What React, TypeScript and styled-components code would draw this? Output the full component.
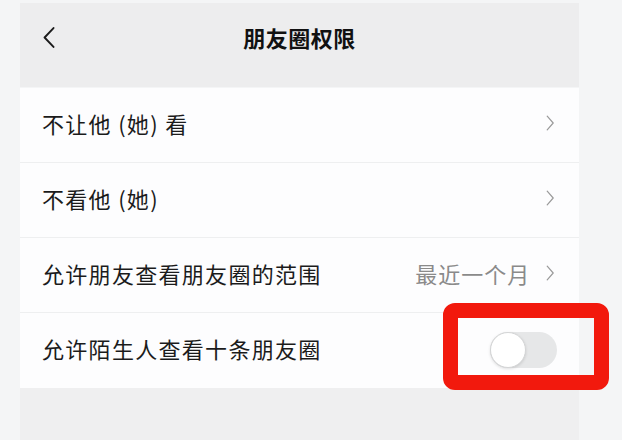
import styled, { createGlobalStyle } from "styled-components"

const GlobalStyle = createGlobalStyle`
    html, body {
        margin: 0;
        padding: 0;
        background: #f4f5f6;
        font-family: "Noto Sans CJK SC", "Noto Sans", sans-serif;
        color: #1b1b1b;
    }
`

type Item = {
    label: string
    value?: string
    arrow?: boolean
    toggle?: boolean
}

const items: Item[] = [
    { label: "不让他 (她) 看", arrow: true },
    { label: "不看他 (她)", arrow: true },
    { label: "允许朋友查看朋友圈的范围", value: "最近一个月", arrow: true },
    { label: "允许陌生人查看十条朋友圈", toggle: true },
]

const Chevron = ({ dir, color, size }: { dir: "left" | "right"; color: string; size: number }) => (
    <svg width={size * 0.55} height={size} viewBox="0 0 11 20" fill="none">
        {dir === "left"
            ? <path d="M10 1 L1.5 10 L10 19" stroke={color} strokeWidth="1.8" strokeLinecap="round" strokeLinejoin="round" />
            : <path d="M1.5 1.5 L9 10 L1.5 18.5" stroke={color} strokeWidth="1.5" strokeLinecap="round" strokeLinejoin="round" />}
    </svg>
)

export default function App() {
    return (<Page>
        <GlobalStyle />
        <Panel>
            <Header>
                <BackButton>
                    <Chevron dir="left" color="#1b1b1b" size={21} />
                </BackButton>
                <Title>朋友圈权限</Title>
                <span />
            </Header>
            <Card>
                {items.map((item, i) => (
                    <Row key={item.label} $last={i === items.length - 1}>
                        <Label>{item.label}</Label>
                        <Right>
                            {item.value && <Value>{item.value}</Value>}
                            {item.arrow && <Chevron dir="right" color="#9a9a9a" size={16} />}
                            {item.toggle && (
                                <ToggleWrap>
                                    <Toggle><Knob /></Toggle>
                                    <Highlight />
                                </ToggleWrap>
                            )}
                        </Right>
                    </Row>
                ))}
            </Card>
            <Footer />
        </Panel>
    </Page>)
}

const Page = styled.div`
    width: 622px;
    height: 440px;
    overflow: hidden;
    padding: 3px 0 0 20px;
    box-sizing: border-box;
`

const Panel = styled.div`
    width: 559px;
    display: flex;
    flex-direction: column;
`

const Header = styled.div`
    height: 84px;
    box-sizing: border-box;
    padding-top: 18px;
    background: #ededee;
    display: grid;
    grid-template-columns: 60px 1fr 60px;
    align-items: start;
    margin-bottom: 1px;
`

const BackButton = styled.div`
    height: 32px;
    display: flex;
    align-items: center;
    padding-left: 23px;
`

const Title = styled.div`
    height: 32px;
    line-height: 32px;
    text-align: center;
    font-size: 22px;
    font-weight: 600;
    letter-spacing: 0.5px;
    color: #111;
`

const Card = styled.div`
    background: #fdfdfe;
    display: flex;
    flex-direction: column;
`

const Row = styled.div<{ $last: boolean }>`
    height: 75px;
    display: flex;
    align-items: center;
    justify-content: space-between;
    padding: 0 24px 0 22px;
    box-sizing: border-box;
    border-bottom: 1px solid ${p => p.$last ? "transparent" : "#eeeff0"};
`

const Label = styled.div`
    font-size: 22px;
    letter-spacing: 1.3px;
    color: #1b1b1b;
    margin-top: -4px;
`

const Right = styled.div`
    display: flex;
    align-items: center;
    gap: 16px;
    margin-top: -4px;
`

const Value = styled.div`
    font-size: 22px;
    letter-spacing: 1px;
    color: #8a8a8a;
`

const ToggleWrap = styled.div`
    position: relative;
    margin-right: -2px;
    margin-top: 4px;
`

const Toggle = styled.div`
    width: 67px;
    height: 36px;
    border-radius: 18px;
    background: #e6e7e8;
    display: flex;
    align-items: center;
`

const Knob = styled.div`
    width: 36px;
    height: 36px;
    border-radius: 50%;
    background: #ffffff;
    box-sizing: border-box;
    border: 1px solid #d4d5d6;
    box-shadow: 0 1px 3px rgba(0, 0, 0, 0.12);
`

const Highlight = styled.div`
    position: absolute;
    left: -47px;
    right: -52px;
    top: -29px;
    bottom: -22px;
    border: 15px solid #f2190d;
    border-radius: 12px;
    pointer-events: none;
`

const Footer = styled.div`
    height: 60px;
    background: #efeff0;
`
